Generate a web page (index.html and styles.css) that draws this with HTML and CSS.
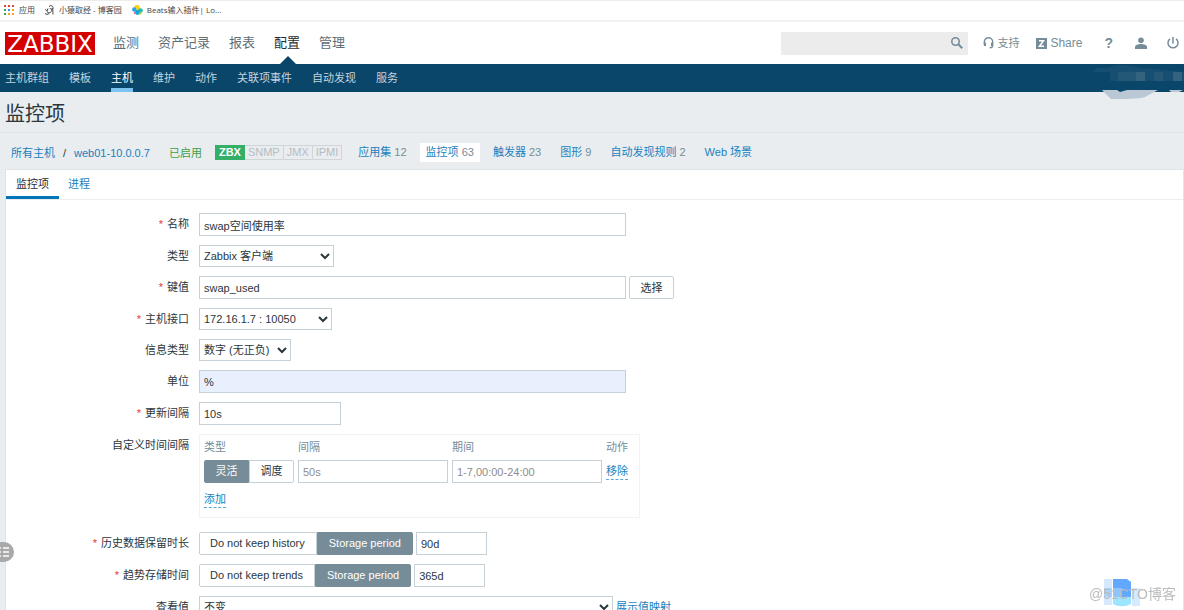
FILE: index.html
```html
<!DOCTYPE html>
<html lang="zh-CN">
<head>
<meta charset="utf-8">
<title>监控项</title>
<link rel="stylesheet" href="styles.css">
</head>
<body>
<div class="bookmarks">
  <a class="bookmark apps" href="#"><svg width="10" height="10" viewBox="0 0 10 10"><path fill="#e4443a" d="M0 0h2v2H0zM4 0h2v2H4zM8 0h2v2H8z"/><path fill="#35a853" d="M0 4h2v2H0z"/><path fill="#4285f4" d="M4 4h2v2H4z"/><path fill="#f5a623" d="M8 4h2v2H8zM4 8h2v2H4zM8 8h2v2H8z"/><path fill="#35a853" d="M0 8h2v2H0z"/></svg>应用</a>
  <a class="bookmark" href="#"><svg width="10" height="10" viewBox="0 0 10 10" fill="none" stroke="#444" stroke-width="1"><path d="M0 4c1 2 2 1.500 3 0M3 3.500c-1.500 2-1 4.500 1 4.500s2.500-2 3-4M4 1.500c1-1.500 4-1 4 1s-3 2-3 .5M8 3c-.5 2 0 4 0 6.500M0 8.500c1 1 3 1 4 0"/></svg>小猿取经 - 博客园</a>
  <a class="bookmark" href="#"><svg width="11" height="10" viewBox="0 0 11 10"><circle cx="5" cy="3" r="3" fill="#fed10a"/><circle cx="8.500" cy="5.500" r="2.300" fill="#24bbb1"/><circle cx="2.300" cy="4.500" r="2.200" fill="#1ba9f5"/><circle cx="5.500" cy="7.500" r="2.400" fill="#07a5de"/><circle cx="8" cy="8.300" r="1.200" fill="#93c83e"/><circle cx="2.800" cy="8" r="1" fill="#ef5098"/></svg>Beats输入插件| Lo...</a>
</div>
<header class="header">
  <a class="logo" href="#">ZABBIX</a>
  <nav class="main-menu">
    <a href="#">监测</a><a href="#">资产记录</a><a href="#">报表</a><a class="active" href="#">配置</a><a href="#">管理</a>
  </nav>
  <form class="search">
    <input type="text" aria-label="搜索">
    <button type="button" aria-label="搜索"><svg width="14" height="14" viewBox="0 0 14 14" fill="none" stroke="#768d99"><circle cx="5.500" cy="5.500" r="3.700" stroke-width="1.600"/><path stroke-width="2" d="M8.300 8.300l4 4"/></svg></button>
  </form>
  <div class="tools">
    <a class="support" href="#"><svg width="11" height="12" viewBox="0 0 11 12" fill="none" stroke="#768d99" stroke-width="1.400"><path d="M1.300 8V5a4.200 4.200 0 0 1 8.400 0v3.500c0 1.500-1 2.200-3 2.200"/><path stroke-width="2" d="M2 5.500v3.500M9 5.500v3.500"/></svg>支持</a>
    <a class="share" href="#"><svg width="11" height="11" viewBox="0 0 11 11"><path fill="#768d99" d="M0 0h11v11H0z"/><path fill="none" stroke="#fff" stroke-width="1.500" d="M3 2.700h4.500L3.500 8.300h4.500"/></svg>Share</a>
    <a class="help" href="#">?</a>
    <a class="user" href="#" aria-label="用户"><svg width="12" height="12" viewBox="0 0 12 12" fill="#768d99"><circle cx="6" cy="3.200" r="2.800"/><path d="M0 12V10c0-2 3-3 6-3s6 1 6 3v2z"/></svg></a>
    <a class="power" href="#" aria-label="退出"><svg width="12" height="12" viewBox="0 0 12 12" fill="none" stroke="#768d99" stroke-width="1.500"><path d="M6 0v6.500M3 1.800a5 5 0 1 0 6 0"/></svg></a>
  </div>
</header>
<nav class="sub-menu">
  <a href="#">主机群组</a><a href="#">模板</a><a class="active" href="#">主机</a><a href="#">维护</a><a href="#">动作</a><a href="#">关联项事件</a><a href="#">自动发现</a><a href="#">服务</a>
  <svg class="smudge" width="94" height="36" viewBox="0 0 94 36"><path fill="#174f72" d="M3 8l4-4h12c5-5 20-3 32 0l43 4v9H20V8z"/><path fill="#245877" d="M28 8h27v9H28zM64 8h9v9h-9z"/><path fill="#33637f" d="M46 8h9v9h-9zM83 8h9v9h-9z"/><path fill="#b9c8d4" d="M12 26h15l3 2 7-2h31l-13 7c-8 2-20 2-34 2zM79 26h14l-4 2h-8z"/></svg>
</nav>
<h1 class="title">监控项</h1>
<div class="path">
  <a href="#">所有主机</a><span class="slash">/</span><a href="#">web01-10.0.0.7</a>
  <span class="enabled">已启用</span>
  <span class="agents"><b>ZBX</b><i>SNMP</i><i>JMX</i><i>IPMI</i></span>
  <span class="counters">
    <span><a href="#">应用集</a> 12</span><span class="selected"><a href="#">监控项</a> 63</span><span><a href="#">触发器</a> 23</span><span><a href="#">图形</a> 9</span><span><a href="#">自动发现规则</a> 2</span><span><a href="#">Web 场景</a></span>
  </span>
</div>
<main class="panel">
  <div class="tabs"><a class="active" href="#">监控项</a><a href="#">进程</a></div>
  <form class="form">
    <label class="required" for="name">名称</label>
    <div class="field"><input class="wide" id="name" type="text" value="swap空间使用率"></div>
    <label for="type">类型</label>
    <div class="field"><select class="type" id="type"><option>Zabbix 客户端</option></select></div>
    <label class="required" for="key">键值</label>
    <div class="field"><input class="wide" id="key" type="text" value="swap_used"><button class="choose" type="button">选择</button></div>
    <label class="required" for="iface">主机接口</label>
    <div class="field"><select class="iface" id="iface"><option>172.16.1.7 : 10050</option></select></div>
    <label for="info">信息类型</label>
    <div class="field"><select class="info" id="info"><option>数字 (无正负)</option></select></div>
    <label for="units">单位</label>
    <div class="field"><input class="wide filled" id="units" type="text" value="%"></div>
    <label class="required" for="delay">更新间隔</label>
    <div class="field"><input class="delay" id="delay" type="text" value="10s"></div>
    <span class="label">自定义时间间隔</span>
    <div class="field">
      <div class="intervals">
        <table>
          <thead><tr><th class="col-type">类型</th><th class="col-value">间隔</th><th class="col-value">期间</th><th>动作</th></tr></thead>
          <tbody>
            <tr>
              <td><div class="segment short"><input type="radio" name="kind" id="flex" checked><label for="flex">灵活</label><input type="radio" name="kind" id="sched"><label for="sched">调度</label></div></td>
              <td><input class="cell" type="text" placeholder="50s" aria-label="间隔"></td>
              <td><input class="cell" type="text" placeholder="1-7,00:00-24:00" aria-label="期间"></td>
              <td><button class="link" type="button">移除</button></td>
            </tr>
          </tbody>
        </table>
        <button class="link" type="button">添加</button>
      </div>
    </div>
    <label class="required" for="history">历史数据保留时长</label>
    <div class="field"><div class="segment"><input type="radio" name="hist" id="hist0"><label for="hist0">Do not keep history</label><input type="radio" name="hist" id="hist1" checked><label for="hist1">Storage period</label></div><input class="period" id="history" type="text" value="90d"></div>
    <label class="required" for="trends">趋势存储时间</label>
    <div class="field"><div class="segment"><input type="radio" name="trend" id="trend0"><label for="trend0">Do not keep trends</label><input type="radio" name="trend" id="trend1" checked><label for="trend1">Storage period</label></div><input class="period" id="trends" type="text" value="365d"></div>
    <label for="view">查看值</label>
    <div class="field"><select class="view" id="view"><option>不变</option></select><a href="#">展示值映射</a></div>
  </form>
</main>
<button class="drawer" type="button" aria-label="目录"><svg width="14" height="20" viewBox="0 0 14 20"><path fill="#a9a9a9" d="M0 0h4a10 10 0 0 1 0 20H0z"/><path stroke="#fff" stroke-width="1.500" d="M0 6h1M3 6h6M0 10h1M3 10h6M0 14h1M3 14h6"/></svg></button>
<div class="watermark"><svg width="44" height="32" viewBox="0 0 44 32"><path fill="#d5eaff" d="M8 1h8v26H8zM36 10h8v18h-8z"/><path fill="#a9d3ff" d="M8 10h8v9H8z"/><path fill="#62a8ff" d="M17 1h14l4 3v15H17z"/><path fill="#8cc5ff" d="M17 10h9v9h-9z"/><path fill="#9ee6ff" d="M17 19h18v7c-6 3-13 3-18 0z"/></svg><span>@51CTO博客</span></div>
</body>
</html>
```
FILE: styles.css
```css
* { box-sizing: border-box; }
html, body { height: 100%; }
body {
  margin: 0;
  overflow: hidden;
  background: #e9edf0;
  color: #2b373d;
  font: 11px/16px "Liberation Sans", "Noto Sans CJK SC", sans-serif;
}
a { color: #1a7fbd; text-decoration: none; }
svg { display: block; flex: none; }
input, select, button { font: inherit; color: inherit; margin: 0; }

.bookmarks {
  display: flex;
  gap: 10px;
  align-items: center;
  height: 22px;
  padding: 0 4px 2px;
  background: #fff;
  border-top: 1px solid #ececec;
  border-bottom: 2px solid #f1f1f1;
  font: 8px/16px "Open Sans", "Noto Sans CJK SC", sans-serif;
}
.bookmark { display: flex; align-items: center; gap: 4px; color: #444; }
.bookmark.apps { gap: 5px; }

.header { display: flex; align-items: center; height: 42px; padding: 0 5px; background: #fff; }
.logo {
  width: 90px;
  height: 23px;
  background: #d40000;
  color: #fff;
  font: 23px/24px "DejaVu Sans", sans-serif;
  text-align: center;
}
.main-menu { display: flex; gap: 19px; height: 42px; margin-left: 18px; font-size: 13px; line-height: 42px; }
.main-menu a { position: relative; color: #5e6e77; }
.main-menu .active { color: #1f2c33; }
.main-menu .active::after {
  content: "";
  position: absolute;
  left: 6px;
  bottom: 0;
  border: 8px solid transparent;
  border-top: 0;
  border-bottom-color: #0a466a;
}
.search { display: flex; width: 187px; height: 23px; margin-left: auto; background: #ececec; }
.search input { flex: 1; min-width: 0; background: none; border: 0; }
.search button { padding: 0 4px; background: none; border: 0; }
.tools { display: flex; align-items: center; margin-left: 15px; }
.tools a { display: flex; align-items: center; color: #768d99; }
.support { gap: 3px; }
.share { gap: 3px; margin-left: 17px; font-size: 12px; }
.tools .help { margin-left: 22px; font-size: 14px; font-weight: bold; }
.user { margin-left: 22px; }
.power { margin-left: 20px; }

.sub-menu { position: relative; display: flex; gap: 20px; height: 28px; padding: 0 5px; background: #0a466a; line-height: 28px; }
.sub-menu a { color: #c3d4df; }
.sub-menu .active { color: #fff; border-bottom: 4px solid #7cc3f1; }
.smudge { position: absolute; right: 0; top: 0; }

.title { margin: 0; height: 41px; padding: 0 5px; border-bottom: 1px solid #dfe4e7; font-size: 20px; font-weight: normal; line-height: 45px; }
.path { display: flex; align-items: center; height: 36px; padding: 3px 11px 0; }
.slash { margin: 0 8px; }
.enabled { margin-left: 19px; color: #429e47; }
.agents { display: flex; margin-left: 13px; line-height: 13px; }
.agents b, .agents i { padding: 0 3px; border: 1px solid #d0d5d8; font-style: normal; font-weight: normal; color: #b6bcc0; }
.agents i { border-left-width: 0; }
.agents b { background: #34af67; border-color: #34af67; color: #fff; font-weight: bold; }
.counters { display: flex; gap: 7px; margin-left: 10px; color: #768d99; white-space: nowrap; }
.counters > span { padding: 2px 6px; line-height: 15px; }
.counters .selected { background: #fff; }

.panel { margin-left: 5px; min-height: 441px; background: #fff; border: 1px solid #dfe4e7; }
.tabs { display: flex; height: 30px; border-bottom: 1px solid #ebeef0; line-height: 29px; }
.tabs a { padding: 0 9px; }
.tabs .active { padding: 0 10px; color: #1f2c33; border-bottom: 3px solid #0275b8; }

.form { display: grid; grid-template-columns: 183px 1fr; column-gap: 10px; row-gap: 9px; padding-top: 13px; }
.form > label, .label { text-align: right; line-height: 22px; }
.required::before { content: "*"; margin-right: 4px; color: #e33734; }
.field { display: flex; align-items: flex-start; gap: 3px; }
.field > a { line-height: 22px; }
.field input[type="text"] { height: 23px; padding: 0 4px; background: #fff; border: 1px solid #c6d1d7; }
.field input::placeholder { color: #8d8d8d; }
.field .wide { width: 427px; }
.field .wide.filled { background: #e8f0fe; }
.field .delay { width: 142px; }
.field .period { width: 71px; }
.field select { height: 22px; padding: 0; background: #fff; border: 1px solid #c6d1d7; border-radius: 0; }
.field .type { width: 135px; }
.field .iface { width: 133px; }
.field .info { width: 92px; }
.field .view { width: 414px; }
.choose { width: 45px; height: 23px; padding: 0; background: #fff; border: 1px solid #c6d1d7; border-radius: 2px; }

.intervals { width: 441px; height: 84px; margin-bottom: 5px; padding: 4px; border: 1px solid #f0f2f3; }
.intervals table { border-collapse: collapse; table-layout: fixed; width: 100%; }
.intervals th { padding: 0; color: #768d99; font-weight: normal; text-align: left; line-height: 17px; }
.intervals td { padding: 4px 0 8px; }
.intervals .col-type { width: 94px; }
.intervals .col-value { width: 154px; }
.intervals .cell { display: block; width: 150px; }
.link { padding: 0; background: none; border: 0; border-bottom: 1px dashed #5aa5d1; color: #1a7fbd; }

.segment { position: relative; display: flex; }
.segment input { position: absolute; opacity: 0; }
.segment label { height: 23px; padding: 0 11px 0 10px; border: 1px solid #c6d1d7; line-height: 21px; }
.segment label:first-of-type { border-radius: 2px 0 0 2px; }
.segment label:last-of-type { padding: 0 11px; border-radius: 0 2px 2px 0; }
.segment input:checked + label { background: #768d99; border-color: #768d99; color: #fff; }
.segment.short { width: 90px; }
.segment.short label { flex: 1; padding: 0; text-align: center; }

.drawer { position: fixed; left: 0; bottom: 48px; padding: 0; background: none; border: 0; }
.watermark { position: fixed; right: 8px; bottom: 0; color: #bbb; font-size: 14px; line-height: 32px; }
.watermark svg { position: absolute; left: 7px; top: 0; }
.watermark span { position: relative; }
```
